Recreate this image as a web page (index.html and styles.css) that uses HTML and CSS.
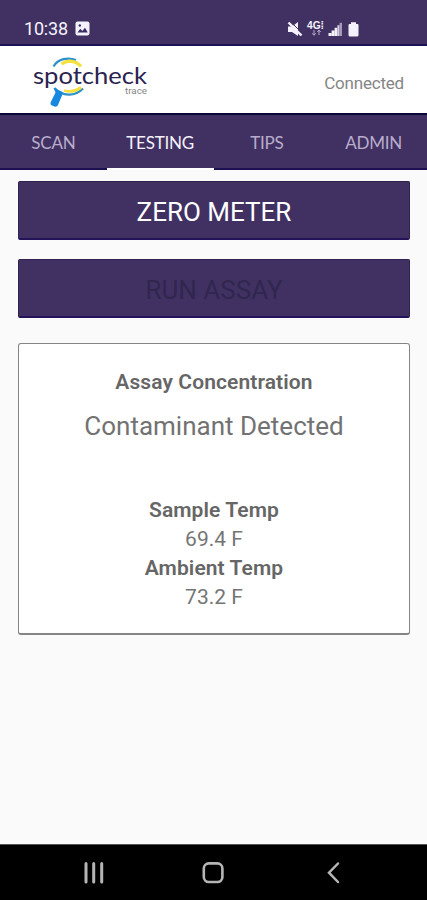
FILE: index.html
```html
<!DOCTYPE html>
<html lang="en">
<head>
<meta charset="utf-8">
<title>Spotcheck Trace</title>
<link rel="stylesheet" href="styles.css">
</head>
<body>
<div class="phone">
  <div class="status">
    <span class="clock">10:38</span>
    <svg class="photo" width="15" height="15" viewBox="0 0 15 15"><rect x=".5" y=".5" width="14" height="14" rx="2" fill="#f5f1fc"/><path d="M2.5 11.5 5.3 7.8 7.3 10 10 6.8 12.8 11.5Z" fill="#3b2b61"/><circle cx="4.8" cy="4.5" r="1.2" fill="#3b2b61"/></svg>
    <svg class="signals" width="72" height="17" viewBox="0 0 72 17">
      <g fill="#f5f1fc">
        <path d="M1 5.500H5L11 1V15L5 11H1Z"/>
        <path d="M3.500 .5 15 12" stroke="#403162" stroke-width="1"/>
        <path d="M1.500 1.500 14.500 14.500" stroke="#f5f1fc" stroke-width="2.400"/>
        <text class="network" x="20" y="8" textLength="17" lengthAdjust="spacingAndGlyphs">4G⁞</text>
        <path d="M27 9V14M25.3 12.3 27 14.3 28.7 12.3M32 14V9.2M30.3 11 32 9 33.7 11" fill="none" stroke="#b8adce" stroke-width="1"/>
        <path d="M41.500 12H44.400V15H41.500ZM44.600 9.500H47.400V15H44.600ZM47.600 6.800H50.400V15H47.600Z"/>
        <path d="M50.400 4.200H52.600V15H50.400Z" fill="#d5cde3"/>
        <path d="M52.600 1.800H55V15H52.600Z" fill="#a69aba"/>
        <path d="M64 1.300H69V3H70.500Q71.500 3 71.500 4V14Q71.500 15.500 70 15.500H63Q61.500 15.500 61.500 14V4Q61.500 3 62.500 3H64Z"/>
      </g>
    </svg>
  </div>
  <header class="header">
    <svg class="logo" width="120" height="54" viewBox="0 0 120 54">
      <path d="M22.500 11.500C27 3.500 37 2 45 5" fill="none" stroke="#2d91c9" stroke-width="2.200"/>
      <path d="M30.500 9C37 4.500 45 5.500 50 11.500" fill="none" stroke="#f5e03c" stroke-width="3.200"/>
      <path d="M23.500 33C31 41.500 44 42 52 33.500" fill="none" stroke="#2d91c9" stroke-width="2.200"/>
      <path d="M33 35.500C39 37.500 45 36 50 32.500" fill="none" stroke="#f5e03c" stroke-width="2.800"/>
      <path d="M22.500 33 31.500 37 31 40.500 27 50Q26 52.300 23.500 51.500L21 50.500Q18.800 49.500 19.800 47L24.500 37.500Z" fill="#1688df"/>
      <text class="brand" x="2" y="28.500" textLength="114" lengthAdjust="spacingAndGlyphs">spotcheck</text>
      <text class="sub" x="94" y="39" textLength="22" lengthAdjust="spacingAndGlyphs">trace</text>
    </svg>
    <span class="connection">Connected</span>
  </header>
  <nav class="tabs">
    <a class="tab">SCAN</a><a class="tab active">TESTING</a><a class="tab">TIPS</a><a class="tab">ADMIN</a>
  </nav>
  <main class="content">
    <button class="action zero">ZERO METER</button>
    <button class="action run" disabled>RUN ASSAY</button>
    <section class="card">
      <h2 class="label concentration">Assay Concentration</h2>
      <p class="result">Contaminant Detected</p>
      <h2 class="label sample">Sample Temp</h2>
      <p class="value">69.4 F</p>
      <h2 class="label ambient">Ambient Temp</h2>
      <p class="value">73.2 F</p>
    </section>
  </main>
  <footer class="navbar">
    <svg width="427" height="56" viewBox="0 0 427 56" fill="none" stroke="#b5b5b5">
      <path d="M86 18.500V37M93.700 18.500V37M101.700 18.500V37" stroke-width="3" stroke-linecap="round"/>
      <rect x="203.800" y="18.400" width="18.600" height="18.600" rx="5" stroke-width="2.600"/>
      <path d="M338 18.500 329 27.700 338 37" stroke-width="2.500" stroke-linecap="round"/>
    </svg>
  </footer>
</div>
</body>
</html>
```
FILE: styles.css
```css
* { box-sizing: border-box; margin: 0; padding: 0; }
body { background: #fafafa; font-family: Roboto, "Liberation Sans", sans-serif; }
.phone { width: 427px; height: 900px; display: flex; flex-direction: column; overflow: hidden; }
.status { height: 46px; background: #403162; border-bottom: 2px solid #1c1152; display: flex; align-items: center; padding: 14px 0 0 24px; }
.clock { font-size: 18px; line-height: 20px; color: #f5f1fc; width: 51px; letter-spacing: -.2px; }
.photo { margin-top: -1px; }
.signals { margin-left: 197px; }
.network { font: bold 10px "Liberation Sans", sans-serif; }
.header { height: 67px; background: #fff; display: flex; align-items: center; justify-content: space-between; padding: 0 23px 0 31px; }
.logo { margin-top: 5px; }
.brand { font: 24px Lato, sans-serif; fill: #2b2350; }
.sub { font: 9px Roboto, sans-serif; fill: #858585; }
.connection { font-size: 17px; line-height: 20px; color: #858585; margin-top: 7px; letter-spacing: -.2px; }
.tabs { height: 57px; display: grid; grid-template-columns: repeat(4, 1fr); background: #403162; border-top: 2px solid #0b0738; }
.tab { display: flex; align-items: center; justify-content: center; padding-top: 2px; font: 17px/22px Lato, sans-serif; letter-spacing: -.2px; color: #b9adcc; border-bottom: 2px solid #1d1052; }
.tab.active { color: #f6f2fc; border-bottom-color: #fff; }
.content { flex: 1; padding: 11px 17px 0 18px; display: flex; flex-direction: column; }
.action { height: 59px; border: 1px solid #30214f; border-bottom: 2px solid #25135a; border-radius: 2px; background: #403162; flex: none; }
.zero { color: #fff; font: 26px/30px Roboto, sans-serif; padding-top: 3px; }
.run { margin-top: 19px; color: #30264f; font: 26px/30px Roboto, sans-serif; padding-top: 3px; }
.card { margin-top: 25px; height: 292px; border: 1.500px solid #858585; border-bottom-width: 2px; border-radius: 3px; background: #fff; padding-top: 24px; text-align: center; color: #666; flex: none; }
.label { font-size: 21px; line-height: 29px; font-weight: 600; letter-spacing: .1px; color: #666; }
.result { font-size: 26px; line-height: 32px; margin: 13px 0 54px; color: #727272; }
.value { font-size: 21px; line-height: 29px; color: #757575; }
.navbar { height: 56px; background: #000; border-top: 1px solid #555; }
.navbar svg { display: block; }
```
